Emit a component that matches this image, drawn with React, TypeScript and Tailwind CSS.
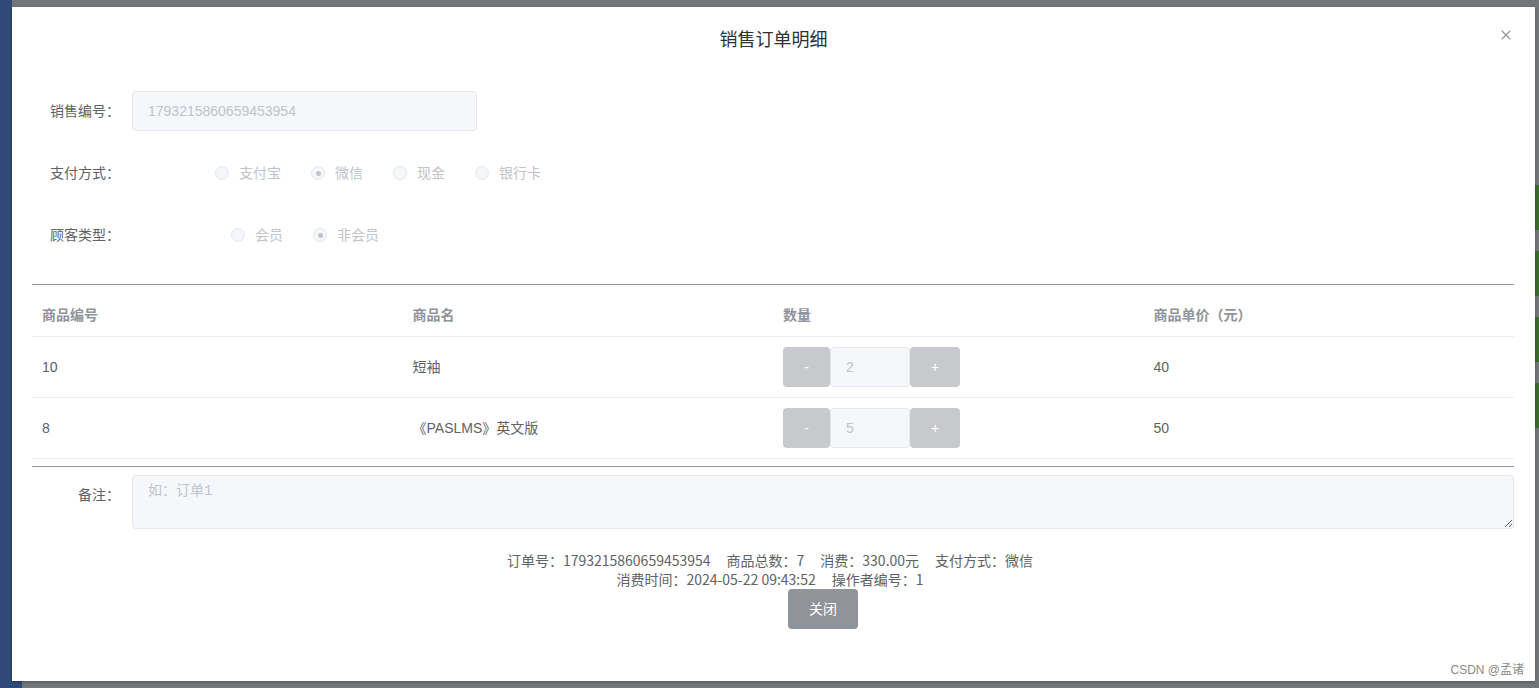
import { X } from 'lucide-react';

const FONT = '"Liberation Sans", "Noto Sans CJK SC", sans-serif';

const goods = [
  { id: '10', name: '短袖', qty: 2, price: '40' },
  { id: '8', name: '《PASLMS》英文版', qty: 5, price: '50' },
];

// zelené proužky na pravém okraji – kus stránky pod maskou
const greenBits = ['top-[185px]', 'top-[251px]', 'top-[317px]', 'top-[383px]'];

const Radio = ({ label, checked }: { label: string; checked?: boolean }) => (
  <span className="flex items-center mr-[30px] cursor-not-allowed">
    <span className="w-[14px] h-[14px] rounded-full border border-[#e4e7ed] bg-[#f5f7fa] flex items-center justify-center">
      {checked && <span className="w-[5px] h-[5px] rounded-full bg-[#c0c4cc]" />}
    </span>
    <span className="ml-[10px] text-[14px] text-[#c0c4cc]">{label}</span>
  </span>
);

const Label = ({ children }: { children: string }) => (
  <div className="w-[100px] shrink-0 text-right pr-[12px] text-[14px] text-[#606266]">{children}</div>
);

const App = () => {
  return (
    <div className="relative w-full h-[688px] bg-[#737678] overflow-hidden" style={{ fontFamily: FONT }}>
      <div className="absolute left-0 top-0 w-[12px] h-full bg-[#2f4a77]" />
      <div className="absolute left-0 bottom-0 w-[22px] h-[7px] bg-[#2f4a77]" />
      {greenBits.map((t) => (
        <div key={t} className={`absolute right-0 ${t} w-[4px] h-[45px] bg-[#3a6e2a]`} />
      ))}

      {/* Dialog */}
      <div className="absolute left-[12px] top-[7px] w-[1523px] h-[674px] bg-white shadow-[0_1px_3px_rgba(0,0,0,0.3)]">
        <div className="h-[66px] flex items-center justify-center text-[18px] text-[#303133]">
          销售订单明细
        </div>
        <button className="absolute top-[20px] right-[21px] text-[#909399]">
          <X size={16} strokeWidth={1.6} />
        </button>

        <div className="pl-[20px] pr-[21px]">
          {/* Form */}
          <div className="mt-[18px] flex items-center h-[40px]">
            <Label>销售编号：</Label>
            <div className="w-[345px] h-[40px] rounded-[4px] border border-[#e4e7ed] bg-[#f5f7fa] flex items-center px-[15px] text-[14px] text-[#c0c4cc]">
              1793215860659453954
            </div>
          </div>

          <div className="mt-[22px] flex items-center h-[40px]">
            <Label>支付方式：</Label>
            <div className="flex items-center ml-[83px]">
              <Radio label="支付宝" />
              <Radio label="微信" checked />
              <Radio label="现金" />
              <Radio label="银行卡" />
            </div>
          </div>

          <div className="mt-[22px] flex items-center h-[40px]">
            <Label>顾客类型：</Label>
            <div className="flex items-center ml-[99px]">
              <Radio label="会员" />
              <Radio label="非会员" checked />
            </div>
          </div>

          <div className="mt-[29px] border-t border-[#999999]" />

          {/* Table */}
          <div className="mt-[10px]">
            <div className="grid grid-cols-4 h-[42px] items-center border-b border-[#ebeef5] text-[14px] font-bold text-[#909399]">
              <div className="pl-[10px]">商品编号</div>
              <div className="pl-[10px]">商品名</div>
              <div className="pl-[10px]">数量</div>
              <div className="pl-[10px]">商品单价（元）</div>
            </div>
            {goods.map((g) => (
              <div
                key={g.id}
                className="grid grid-cols-4 h-[61px] items-center border-b border-[#ebeef5] text-[14px] text-[#606266]"
              >
                <div className="pl-[10px]">{g.id}</div>
                <div className="pl-[10px]">{g.name}</div>
                <div className="pl-[10px] flex items-center">
                  <div className="w-[47px] h-[40px] rounded-[4px] bg-[#c8c9cc] text-white flex items-center justify-center">
                    -
                  </div>
                  <div className="w-[80px] h-[40px] rounded-[4px] border border-[#e4e7ed] bg-[#f5f7fa] flex items-center px-[15px] text-[#c0c4cc]">
                    {g.qty}
                  </div>
                  <div className="w-[50px] h-[40px] rounded-[4px] bg-[#c8c9cc] text-white flex items-center justify-center">
                    +
                  </div>
                </div>
                <div className="pl-[10px]">{g.price}</div>
              </div>
            ))}
          </div>

          <div className="mt-[7px] border-t border-[#999999]" />

          <div className="mt-[8px] flex items-start">
            <div className="w-[100px] shrink-0 text-right pr-[12px] text-[14px] text-[#606266] pt-[10px]">备注：</div>
            <textarea
              disabled
              placeholder="如：订单1"
              className="flex-1 h-[54px] rounded-[4px] border border-[#e4e7ed] bg-[#f5f7fa] px-[15px] py-[5px] text-[14px] leading-[21px] placeholder:text-[#c0c4cc] outline-none"
              style={{ fontFamily: '"Liberation Mono", "Noto Sans CJK SC", monospace' }}
            />
          </div>

          {/* Summary */}
          <div className="mt-[22px] pr-[6px] text-center text-[14px] leading-[19px] text-[#606266]" style={{ fontFamily: '"Noto Sans CJK SC", sans-serif' }}>
            <div>
              订单号：1793215860659453954
              <span className="ml-[16px]">商品总数：7</span>
              <span className="ml-[16px]">消费：330.00元</span>
              <span className="ml-[16px]">支付方式：微信</span>
            </div>
            <div>
              消费时间：2024-05-22 09:43:52
              <span className="ml-[16px]">操作者编号：1</span>
            </div>
          </div>
          <div className="flex justify-center pl-[100px]">
            <button className="w-[70px] h-[40px] rounded-[4px] bg-[#909399] text-white text-[14px]">关闭</button>
          </div>
        </div>

        <div className="absolute right-[11px] bottom-[2px] text-[12px] text-[#8a8a8a]">CSDN @孟诸</div>
      </div>
    </div>
  );
};

export default App;
